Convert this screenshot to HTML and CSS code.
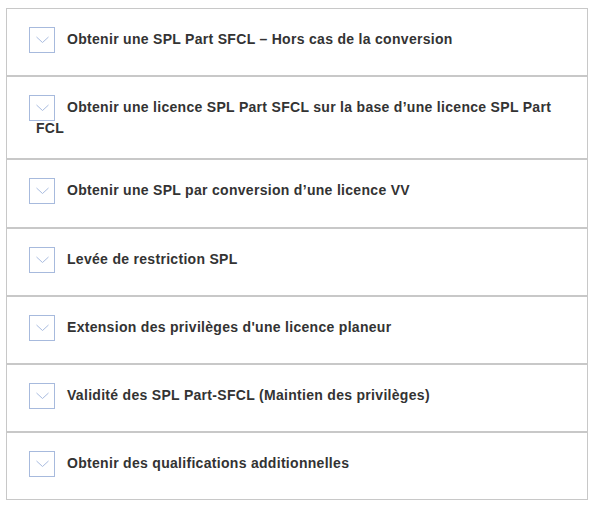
FILE: index.html
```html
<!DOCTYPE html>
<html lang="fr">
<head>
  <meta charset="UTF-8" />
  <meta name="viewport" content="width=device-width, initial-scale=1.0"/>
  <title>Licences SPL</title>
  <link rel="stylesheet" href="styles.css">
</head>
<body>
  <div class="accordion">
    <div class="item">
      <h3 class="item-title"><span class="toggle"><svg width="26" height="26" viewBox="0 0 26 26"><polyline points="7.5,10 13.5,15.5 19.5,10" /></svg></span>Obtenir une SPL Part SFCL – Hors cas de la conversion</h3>
    </div>
    <div class="item">
      <h3 class="item-title"><span class="toggle"><svg width="26" height="26" viewBox="0 0 26 26"><polyline points="7.5,10 13.5,15.5 19.5,10" /></svg></span>Obtenir une licence SPL Part SFCL sur la base d’une licence SPL Part FCL</h3>
    </div>
    <div class="item">
      <h3 class="item-title"><span class="toggle"><svg width="26" height="26" viewBox="0 0 26 26"><polyline points="7.5,10 13.5,15.5 19.5,10" /></svg></span>Obtenir une SPL par conversion d’une licence VV</h3>
    </div>
    <div class="item">
      <h3 class="item-title"><span class="toggle"><svg width="26" height="26" viewBox="0 0 26 26"><polyline points="7.5,10 13.5,15.5 19.5,10" /></svg></span>Levée de restriction SPL</h3>
    </div>
    <div class="item">
      <h3 class="item-title"><span class="toggle"><svg width="26" height="26" viewBox="0 0 26 26"><polyline points="7.5,10 13.5,15.5 19.5,10" /></svg></span>Extension des privilèges d'une licence planeur</h3>
    </div>
    <div class="item">
      <h3 class="item-title"><span class="toggle"><svg width="26" height="26" viewBox="0 0 26 26"><polyline points="7.5,10 13.5,15.5 19.5,10" /></svg></span>Validité des SPL Part-SFCL (Maintien des privilèges)</h3>
    </div>
    <div class="item">
      <h3 class="item-title"><span class="toggle"><svg width="26" height="26" viewBox="0 0 26 26"><polyline points="7.5,10 13.5,15.5 19.5,10" /></svg></span>Obtenir des qualifications additionnelles</h3>
    </div>
  </div>
</body>
</html>
```

FILE: styles.css
```css
body {
  font-family: "Liberation Sans", Arial, sans-serif;
  background-color: #fff;
  color: #333;
  margin: 0;
  padding: 8px 6px;
}
.accordion {
  width: 582px;
}
.item {
  border: 1px solid #c8c8c8;
}
.item-title {
  margin: 0;
  font-size: 14px;
  font-weight: bold;
  letter-spacing: 0.3px;
  line-height: 15px;
  padding: 18px 20px 22.2px 29px;
}
.toggle {
  display: inline-block;
  width: 24px;
  height: 24px;
  border: 1px solid #a7badd;
  vertical-align: middle;
  margin-right: 12px;
  margin-left: -7px;
}
.toggle svg {
  display: block;
  margin: -1px;
}
.toggle polyline {
  fill: none;
  stroke: #a9bce0;
  stroke-width: 1;
}
```
